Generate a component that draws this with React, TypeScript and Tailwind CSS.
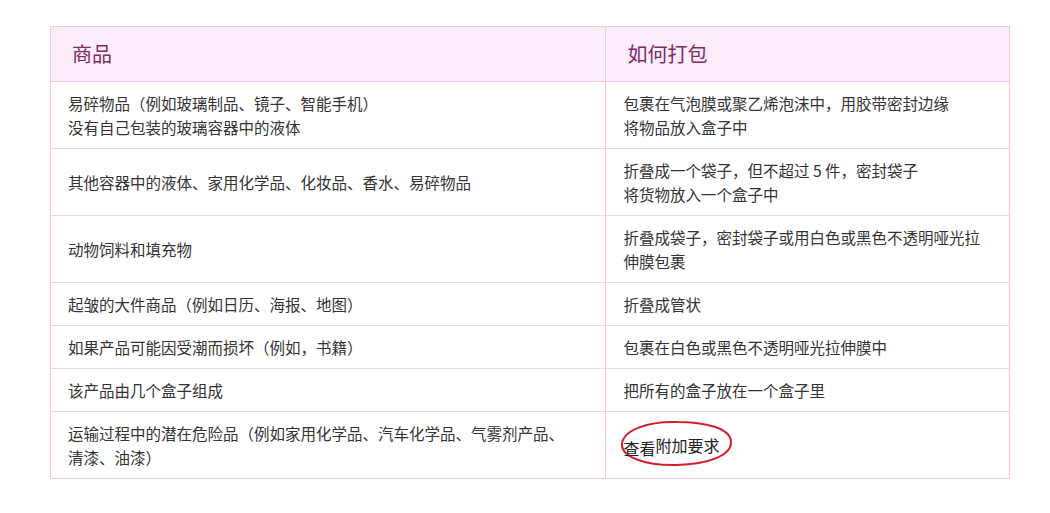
import * as React from "react";

const rows: { item: string[]; pack: string[] }[] = [
  {
    item: ["易碎物品（例如玻璃制品、镜子、智能手机）", "没有自己包装的玻璃容器中的液体"],
    pack: ["包裹在气泡膜或聚乙烯泡沫中，用胶带密封边缘", "将物品放入盒子中"],
  },
  {
    item: ["其他容器中的液体、家用化学品、化妆品、香水、易碎物品"],
    pack: ["折叠成一个袋子，但不超过 5 件，密封袋子", "将货物放入一个盒子中"],
  },
  {
    item: ["动物饲料和填充物"],
    pack: ["折叠成袋子，密封袋子或用白色或黑色不透明哑光拉伸膜包裹"],
  },
  { item: ["起皱的大件商品（例如日历、海报、地图）"], pack: ["折叠成管状"] },
  { item: ["如果产品可能因受潮而损坏（例如，书籍）"], pack: ["包裹在白色或黑色不透明哑光拉伸膜中"] },
  { item: ["该产品由几个盒子组成"], pack: ["把所有的盒子放在一个盒子里"] },
];

// hand-drawn red circle around the link text
const Scribble = () => (
  <svg className="absolute left-[-4px] top-[-14px] pointer-events-none" width="116" height="50" viewBox="0 0 116 50" fill="none">
    <path
      d="M58 3C30 2 4 11 3 25c-1 13 24 22 55 21c31-1 54-9 54-23C112 9 86 3 58 3Z"
      stroke="#d4202a"
      strokeWidth="2"
    />
  </svg>
);

export default function App() {
  return (
    <div className="min-h-[513px] bg-white pl-[50px] pt-[26px]" style={{ fontFamily: '"Microsoft YaHei", "Noto Sans CJK SC", sans-serif' }}>
      <table className="w-[960px] border-collapse border border-[#f4c8e2] text-[15.5px] leading-[24px] text-[#333]">
        <colgroup>
          <col className="w-[556px]" />
          <col className="w-[404px]" />
        </colgroup>
        <thead>
          <tr className="bg-[#fdedfb] text-[20px] leading-[28px] text-[#7a2c68] text-left">
            <th className="font-normal border border-[#f4c8e2] pl-[21px] py-[13px]">商品</th>
            <th className="font-normal border border-[#f4c8e2] pl-[21px] py-[13px]">如何打包</th>
          </tr>
        </thead>
        <tbody>
          {rows.map((r, i) => (
            <tr key={i} className="border-b border-[#e4dce2]">
              <td className="border-x border-[#f4c8e2] px-[17px] py-[9px] align-middle">
                {r.item.map((t) => (
                  <div key={t}>{t}</div>
                ))}
              </td>
              <td className="border-x border-[#f4c8e2] px-[17px] py-[9px] align-middle">
                {r.pack.map((t) => (
                  <div key={t}>{t}</div>
                ))}
              </td>
            </tr>
          ))}
          <tr className="border-b border-[#f4c8e2]">
            <td className="border-x border-[#f4c8e2] px-[17px] py-[9px] align-middle">
              <div>运输过程中的潜在危险品（例如家用化学品、汽车化学品、气雾剂产品、</div>
              <div>清漆、油漆）</div>
            </td>
            <td className="border-x border-[#f4c8e2] px-[17px] py-[9px] align-middle">
              <span className="relative inline-block text-[16px] leading-[24px] text-[#222]">
                <Scribble />
                <span className="relative top-[3px]">查看</span>附加要求
              </span>
            </td>
          </tr>
        </tbody>
      </table>
    </div>
  );
}
